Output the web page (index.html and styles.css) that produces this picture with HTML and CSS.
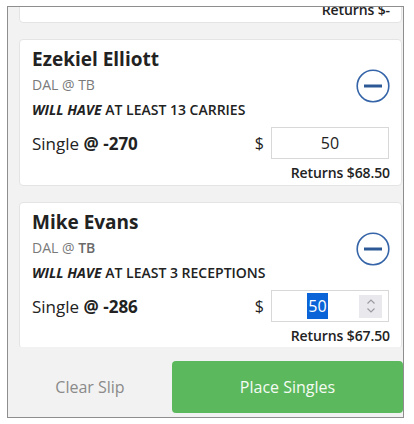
FILE: index.html
```html
<!DOCTYPE html>
<html lang="en">
<head>
    <meta charset="UTF-8">
    <meta name="viewport" content="width=device-width, initial-scale=1.0">
    <title>Bet Slip</title>
    <link rel="stylesheet" href="styles.css">
</head>
<body>
    <div class="slip">
        <div class="slip-list">
            <div class="bet bet-partial">
                <div class="returns">Returns $-</div>
            </div>

            <div class="bet">
                <div class="bet-head">
                    <div class="bet-info">
                        <div class="player">Ezekiel Elliott</div>
                        <div class="game">DAL @ TB</div>
                        <div class="market"><em>WILL HAVE</em> AT LEAST 13 CARRIES</div>
                    </div>
                    <button class="remove" aria-label="Remove">
                        <svg width="34" height="34" viewBox="0 0 34 34">
                            <circle cx="17" cy="17" r="15.8" fill="none" stroke="#3565a8" stroke-width="1.6"/>
                            <line x1="8" y1="17" x2="26" y2="17" stroke="#2c5896" stroke-width="3"/>
                        </svg>
                    </button>
                </div>
                <div class="stake-row">
                    <div class="odds">Single <b>@ -270</b></div>
                    <span class="dollar">$</span>
                    <div class="stake"><span class="stake-value">50</span></div>
                </div>
                <div class="returns">Returns $68.50</div>
            </div>

            <div class="bet">
                <div class="bet-head">
                    <div class="bet-info">
                        <div class="player">Mike Evans</div>
                        <div class="game">DAL @ <span class="team">TB</span></div>
                        <div class="market"><em>WILL HAVE</em> AT LEAST 3 RECEPTIONS</div>
                    </div>
                    <button class="remove" aria-label="Remove">
                        <svg width="34" height="34" viewBox="0 0 34 34">
                            <circle cx="17" cy="17" r="15.8" fill="none" stroke="#3565a8" stroke-width="1.6"/>
                            <line x1="8" y1="17" x2="26" y2="17" stroke="#2c5896" stroke-width="3"/>
                        </svg>
                    </button>
                </div>
                <div class="stake-row">
                    <div class="odds">Single <b>@ -286</b></div>
                    <span class="dollar">$</span>
                    <div class="stake stake-active">
                        <span class="stake-value"><span class="selected">50</span></span>
                        <span class="spinner">
                            <svg width="12" height="18" viewBox="0 0 12 18">
                                <polyline points="2.5,6.5 6,3 9.5,6.5" fill="none" stroke="#9a9aa2" stroke-width="1.2"/>
                                <polyline points="2.5,11.5 6,15 9.5,11.5" fill="none" stroke="#9a9aa2" stroke-width="1.2"/>
                            </svg>
                        </span>
                    </div>
                </div>
                <div class="returns">Returns $67.50</div>
            </div>
        </div>

        <div class="slip-footer">
            <button class="clear-btn">Clear Slip</button>
            <button class="place-btn">Place Singles</button>
        </div>
    </div>
</body>
</html>
```

FILE: styles.css
```css
body, html {
    margin: 0;
    padding: 0;
    background-color: #fff;
    font-family: 'Open Sans', 'Noto Sans', sans-serif;
    color: #222;
}

.slip {
    box-sizing: border-box;
    width: 397px;
    height: 412px;
    margin: 6px 0 0 7px;
    border: 1px solid #8e8e8e;
    background-color: #f2f2f2;
    display: flex;
    flex-direction: column;
}

.slip-list {
    flex: 1;
    overflow: hidden;
    padding: 0 1px 0 11px;
    display: flex;
    flex-direction: column;
    gap: 16px;
}

.bet {
    flex-shrink: 0;
    background-color: #fff;
    border: 1px solid #e4e4e4;
    border-radius: 4px;
    padding: 6px 11px 0 12px;
}

.bet-partial {
    margin-top: -10px;
    padding-top: 0;
}

.bet-head {
    display: flex;
    align-items: center;
}

.bet-info {
    flex: 1;
}

.player {
    font-size: 19px;
    font-weight: 700;
    line-height: 26px;
}

.game {
    font-size: 14px;
    line-height: 26px;
    color: #7a7a7a;
}

.game .team {
    font-weight: 600;
    color: #6a6a6a;
}

.market {
    font-size: 14px;
    font-weight: 600;
    line-height: 24px;
}

.market em {
    font-weight: 700;
}

.remove {
    border: none;
    background: none;
    padding: 0;
    margin: 4px 0 0 0;
    width: 34px;
    height: 34px;
    cursor: pointer;
}

.stake-row {
    display: flex;
    align-items: center;
    margin-top: 5px;
}

.odds {
    flex: 1;
    font-size: 17px;
}

.dollar {
    font-size: 16px;
    margin-right: 7px;
}

.stake {
    box-sizing: border-box;
    width: 118px;
    height: 32px;
    border: 1px solid #d8d8d8;
    display: flex;
    align-items: center;
    margin-right: 1px;
}

.stake-value {
    flex: 1;
    text-align: center;
    font-size: 16px;
}

.stake-active .stake-value {
    padding-left: 4px;
}

.selected {
    background-color: #0b63d8;
    color: #fff;
    padding: 2px 1px;
}

.spinner {
    display: flex;
    align-items: center;
    justify-content: center;
    width: 23px;
    height: 23px;
    background-color: #e9e9ed;
    margin-right: 6px;
}

.returns {
    font-size: 14px;
    font-weight: 600;
    line-height: 24px;
    text-align: right;
    margin-top: 2px;
    letter-spacing: -0.1px;
}

.bet-partial .returns {
    margin-top: 0;
}

.slip-footer {
    display: flex;
    height: 70px;
    padding: 14px 0 4px 0;
    box-sizing: border-box;
    flex-shrink: 0;
}

.clear-btn {
    width: 164px;
    border: none;
    background: none;
    font-family: 'Open Sans', sans-serif;
    font-size: 16px;
    color: #8a8a8a;
    cursor: pointer;
}

.place-btn {
    flex: 1;
    border: none;
    border-radius: 4px;
    background-color: #5cb85c;
    color: #f4fbf4;
    font-family: 'Open Sans', sans-serif;
    font-size: 16px;
    cursor: pointer;
}
```
